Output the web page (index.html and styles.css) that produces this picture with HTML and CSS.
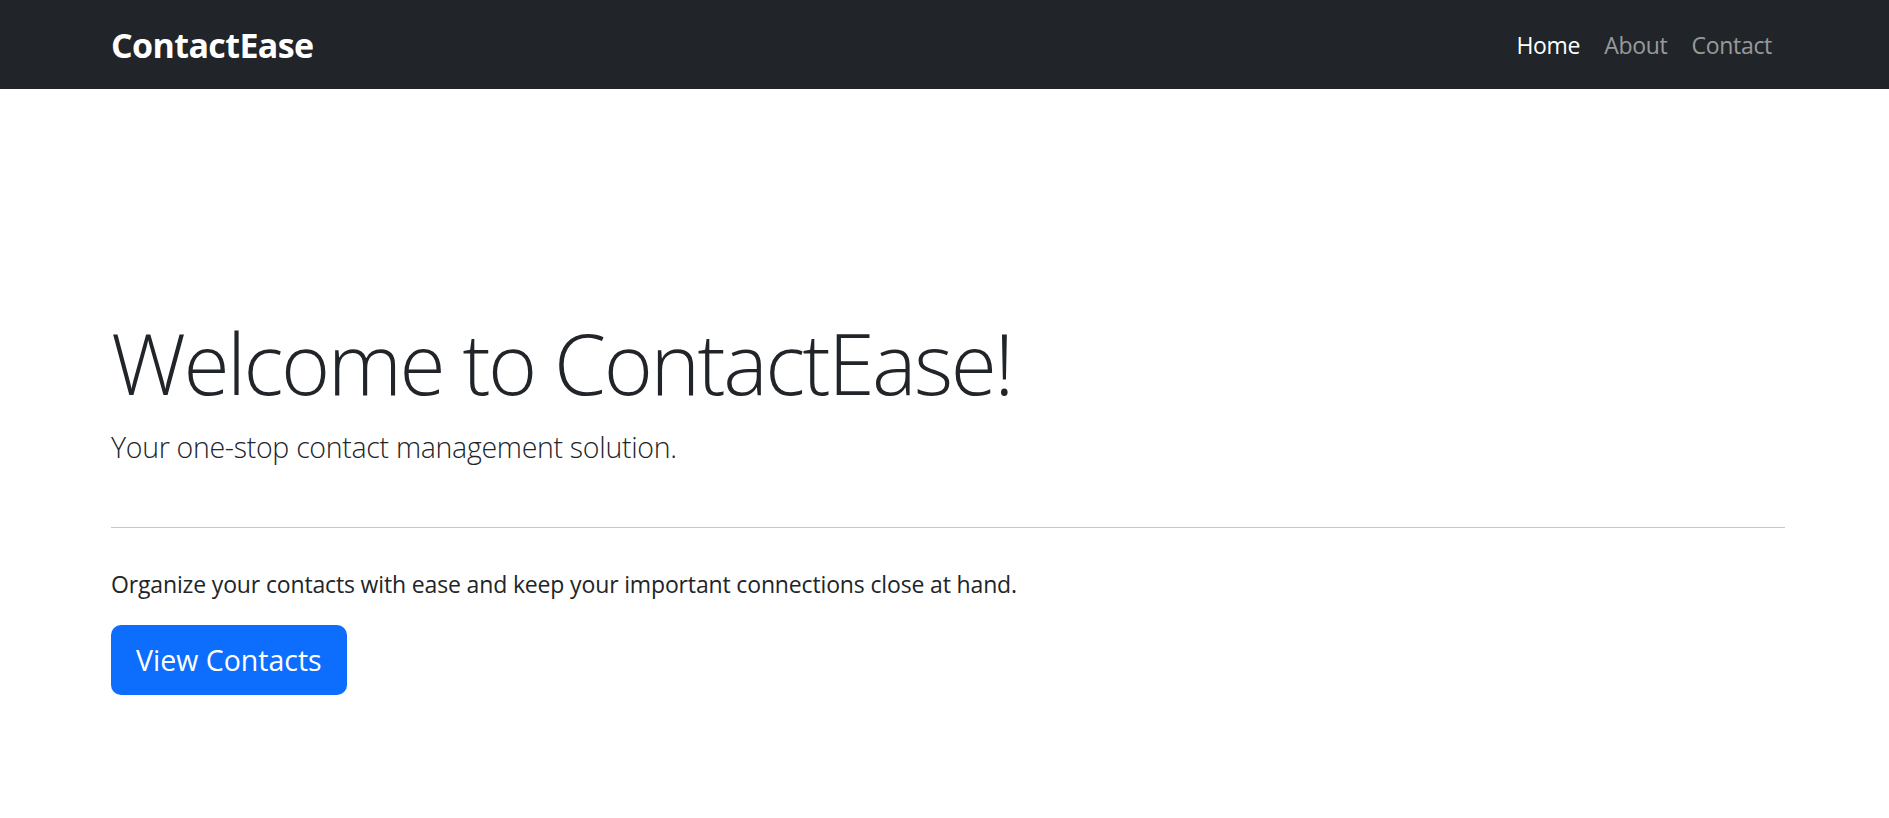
FILE: index.html
```html
<!DOCTYPE html>
<html lang="en">
<head>
<meta charset="utf-8">
<title>ContactEase</title>
<link rel="stylesheet" href="styles.css">
</head>
<body>
<header class="navbar">
  <div class="nav-inner">
    <a class="brand" href="#">ContactEase</a>
    <nav class="nav-links">
      <a class="nav-link active" href="#">Home</a>
      <a class="nav-link" href="#">About</a>
      <a class="nav-link" href="#">Contact</a>
    </nav>
  </div>
</header>
<main class="hero">
  <h1 class="display">Welcome to ContactEase!</h1>
  <p class="lead">Your one-stop contact management solution.</p>
  <hr class="divider">
  <p class="text">Organize your contacts with ease and keep your important connections close at hand.</p>
  <a class="btn" href="#">View Contacts</a>
</main>
</body>
</html>
```
FILE: styles.css
```css
* { box-sizing: border-box; }
html, body { margin: 0; padding: 0; }
body {
  font-family: "Open Sans", "Noto Sans", sans-serif;
  color: #212529;
  background: #fff;
}
.navbar {
  background: #212529;
  height: 89px;
  display: flex;
  align-items: center;
}
.nav-inner {
  flex: 1;
  display: flex;
  align-items: center;
  justify-content: space-between;
  padding: 0 117px 0 111px;
}
.brand {
  color: #fff;
  text-decoration: none;
  font-weight: 700;
  font-size: 34px;
  letter-spacing: -0.6px;
}
.nav-links {
  display: flex;
  gap: 24px;
}
.nav-link {
  color: rgba(255,255,255,0.55);
  text-decoration: none;
  font-size: 23px;
  letter-spacing: -0.3px;
}
.nav-link.active { color: #fff; }
.hero {
  padding: 224px 104px 0 111px;
}
.display {
  margin: 0;
  font-weight: 300;
  font-size: 84px;
  line-height: 1.2;
  letter-spacing: -2.5px;
}
.lead {
  margin: 14px 0 0;
  font-weight: 300;
  font-size: 28.5px;
  letter-spacing: -0.3px;
}
.divider {
  margin: 61px 0 0;
  border: 0;
  border-top: 1px solid #c8c8c8;
}
.text {
  margin: 40px 0 0;
  font-size: 23px;
  letter-spacing: -0.15px;
}
.btn {
  display: inline-block;
  margin-top: 25px;
  background: #0d6efd;
  color: #fff;
  text-decoration: none;
  font-size: 28.5px;
  height: 70px;
  line-height: 70px;
  padding: 0 25px;
  border-radius: 10px;
}
```
